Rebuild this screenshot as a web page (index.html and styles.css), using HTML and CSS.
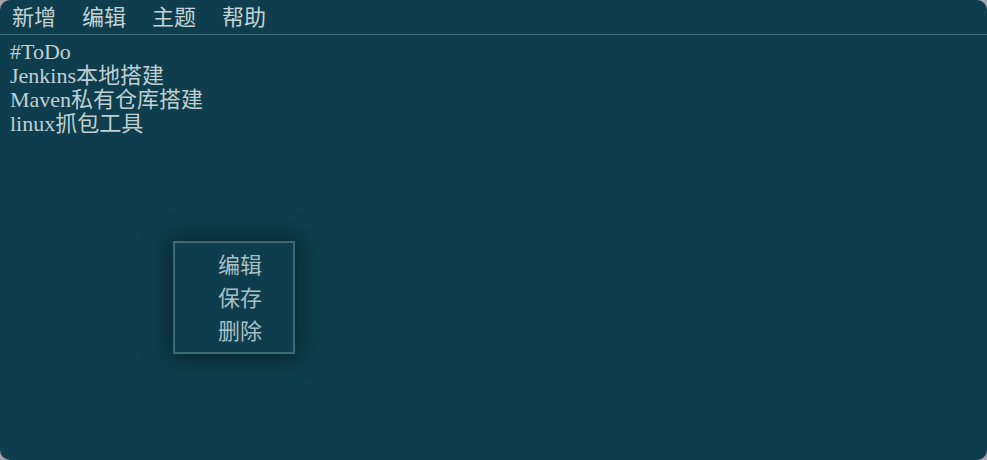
FILE: index.html
```html
<!DOCTYPE html>
<html lang="zh-CN">
<head>
  <meta charset="UTF-8" />
  <title>便签</title>
  <link rel="stylesheet" href="styles.css">
</head>
<body>
  <div class="window">
    <div class="menubar">
      <span class="menu-item">新增</span>
      <span class="menu-item">编辑</span>
      <span class="menu-item">主题</span>
      <span class="menu-item">帮助</span>
    </div>

    <div class="notes">
      <div class="note">#ToDo</div>
      <div class="note">Jenkins本地搭建</div>
      <div class="note">Maven私有仓库搭建</div>
      <div class="note">linux抓包工具</div>
    </div>

    <div class="context-menu">
      <div class="context-item">编辑</div>
      <div class="context-item">保存</div>
      <div class="context-item">删除</div>
    </div>
  </div>
</body>
</html>
```

FILE: styles.css
```css
html, body {
  margin: 0;
  height: 100%;
}
body {
  background: #a8a2ac;
  font-family: "Liberation Serif", "Noto Sans CJK SC", serif;
}
.window {
  position: relative;
  height: 460px;
  background: #0e3e4d;
  border-radius: 10px;
  overflow: hidden;
  color: #c2cfd2;
}
.menubar {
  display: flex;
  gap: 26px;
  height: 35px;
  padding-left: 12px;
  align-items: center;
  border-bottom: 1px solid #3a6c78;
  box-sizing: border-box;
}
.menu-item {
  font-size: 22px;
  line-height: 35px;
  color: #c6d2d4;
}
.notes {
  padding: 5px 10px;
}
.note {
  font-size: 22px;
  line-height: 24px;
}
.context-menu {
  position: absolute;
  left: 173px;
  top: 241px;
  width: 122px;
  height: 113px;
  box-sizing: border-box;
  border: 2px solid #3c6b77;
  background: #0e3e4d;
  padding-top: 6px;
  box-shadow: 0 0 22px 6px rgba(0, 0, 0, 0.35);
}
.context-item {
  padding-left: 43px;
  font-size: 22px;
  line-height: 33px;
  color: #aabfc4;
}
```
